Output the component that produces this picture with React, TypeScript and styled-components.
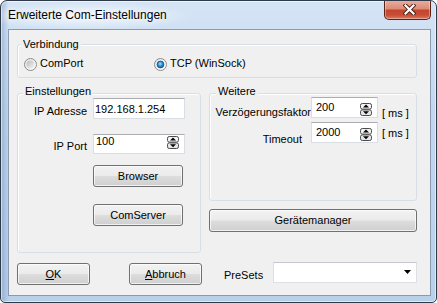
import React, { FC, ReactNode } from "react";
import styled, { createGlobalStyle } from "styled-components";

const GlobalStyle = createGlobalStyle`
  html, body {
    margin: 0;
    padding: 0;
    background: #ffffff;
  }
  body {
    font-family: "Liberation Sans", Arial, sans-serif;
    font-size: 11px;
    color: #000000;
  }
`;

const Window = styled.div`
  box-sizing: border-box;
  width: 437px;
  height: 303px;
  display: flex;
  flex-direction: column;
  border: 1px solid #2e3a48;
  border-radius: 7px 7px 5px 5px;
  overflow: hidden;
  background:
    radial-gradient(ellipse 110px 14px at 85px 15px, rgba(255, 255, 255, 0.75), rgba(255, 255, 255, 0) 100%),
    linear-gradient(90deg, rgba(60, 100, 150, 0.3) 0px, rgba(60, 100, 150, 0) 8px),
    linear-gradient(180deg, #d5e4f5 0%, #c3d8ef 35%, #b9d0ea 100%);
  box-shadow: inset 0 0 0 1px rgba(255, 255, 255, 0.55);
`;

const TitleBar = styled.div`
  flex: none;
  height: 28px;
  display: flex;
  align-items: flex-start;
  padding-left: 7px;
`;

const TitleText = styled.div`
  margin-top: 7px;
  font-size: 12px;
  line-height: 14px;
  text-shadow: 0 0 5px rgba(255, 255, 255, 0.9), 0 0 10px rgba(255, 255, 255, 0.8);
`;

const CloseButton = styled.div`
  box-sizing: border-box;
  margin: -1px 5px 0 auto;
  width: 47px;
  height: 20px;
  display: flex;
  align-items: center;
  justify-content: center;
  padding-left: 3px;
  border: 1px solid #5a2218;
  border-top: none;
  border-radius: 0 0 5px 5px;
  background: linear-gradient(180deg, #eab0a2 0%, #dc8c78 45%, #c4452e 55%, #c94e36 80%, #dc7c60 100%);
  box-shadow: inset 0 0 0 1px rgba(255, 255, 255, 0.35);
`;

const Client = styled.div`
  flex: 1;
  display: flex;
  flex-direction: column;
  margin: 0 5px 6px 7px;
  padding: 14px 0 0 8px;
  border: 1px solid #8a9bb0;
  background: #f0f0f0;
`;

const GroupBox = styled.div<{ $w: number; $h: number }>`
  position: relative;
  box-sizing: border-box;
  width: ${(p) => p.$w}px;
  height: ${(p) => p.$h}px;
  border: 1px solid #d5dfe5;
  border-radius: 3px;
  box-shadow: inset 1px 1px 0 #ffffff;
`;

const Legend = styled.span<{ $x: number; $y: number }>`
  position: absolute;
  left: ${(p) => p.$x}px;
  top: ${(p) => p.$y}px;
  padding: 0 2px;
  line-height: 13px;
  background: #f0f0f0;
`;

const RadioRow = styled.div`
  display: flex;
  padding: 12px 0 0 6px;
`;

const RadioItem = styled.label<{ $w?: number }>`
  display: flex;
  align-items: flex-start;
  gap: 3px;
  width: ${(p) => (p.$w ? `${p.$w}px` : "auto")};
  line-height: 13px;
  svg {
    margin-top: 1px;
  }
`;

const MiddleRow = styled.div`
  display: flex;
  gap: 8px;
  margin-top: 15px;
`;

const Column = styled.div`
  display: flex;
  flex-direction: column;
  gap: 8px;
`;

const FormGrid = styled.div<{ $cols: string; $rows: string; $gap: number; $top: number }>`
  display: grid;
  grid-template-columns: ${(p) => p.$cols};
  grid-template-rows: ${(p) => p.$rows};
  column-gap: ${(p) => p.$gap}px;
  align-items: start;
  padding-top: ${(p) => p.$top}px;
`;

const FieldLabel = styled.span<{ $dy: number; $pr?: number }>`
  grid-column: 1;
  text-align: right;
  white-space: nowrap;
  line-height: 13px;
  padding-top: ${(p) => p.$dy}px;
  padding-right: ${(p) => p.$pr ?? 0}px;
`;

const Unit = styled.span<{ $dy: number }>`
  white-space: pre;
  line-height: 13px;
  padding: ${(p) => p.$dy}px 0 0 4px;
`;

const EditBox = styled.div<{ $w: number; $h: number }>`
  box-sizing: border-box;
  width: ${(p) => p.$w}px;
  height: ${(p) => p.$h}px;
  display: flex;
  align-items: flex-start;
  background: #ffffff;
  border: 1px solid #d9dde4;
  border-top-color: #abadb3;
`;

const EditText = styled.span<{ $pl: number; $pt: number }>`
  flex: 1;
  line-height: 13px;
  padding: ${(p) => p.$pt}px 0 0 ${(p) => p.$pl}px;
`;

const SpinSlot = styled.span<{ $top: number }>`
  display: flex;
  margin: ${(p) => p.$top}px 5px 0 0;
`;

const Button = styled.button<{ $w: number; $h?: number; $col?: number }>`
  box-sizing: border-box;
  grid-column: ${(p) => p.$col ?? "auto"};
  width: ${(p) => p.$w}px;
  height: ${(p) => p.$h ?? 22}px;
  padding: 0;
  border: 1px solid #707070;
  border-radius: 3px;
  background: linear-gradient(180deg, #f2f2f2 0%, #ebebeb 48%, #dddddd 52%, #cfcfcf 100%);
  box-shadow: inset 0 0 0 1px rgba(255, 255, 255, 0.7);
  font: inherit;
  color: #000000;
  text-align: center;
  line-height: 13px;
`;

const Footer = styled.div`
  display: flex;
  align-items: flex-start;
  margin-top: 9px;
`;

const FooterButton = styled(Button)<{ $ml?: number }>`
  margin: 1px 0 0 ${(p) => p.$ml ?? 0}px;
`;

const PresetLabel = styled.span`
  width: 49px;
  margin: 7px 0 0 22px;
  line-height: 13px;
`;

const ComboBox = styled.div`
  box-sizing: border-box;
  width: 144px;
  height: 21px;
  display: flex;
  align-items: center;
  justify-content: flex-end;
  padding: 0 5px 2px 0;
  background: #ffffff;
  border: 1px solid #dcdfe4;
  border-top-color: #c5c8ce;
`;

const CloseGlyph: FC = () => (
  <svg width="13" height="11" viewBox="0 0 13 11">
    <path d="M2.5 1.5 L10.5 9.5 M10.5 1.5 L2.5 9.5" stroke="#4a1d15" strokeWidth="4" strokeLinecap="square" />
    <path d="M2.5 1.5 L10.5 9.5 M10.5 1.5 L2.5 9.5" stroke="#ffffff" strokeWidth="2.2" strokeLinecap="square" />
  </svg>
);

const RadioMark: FC<{ id: string; checked?: boolean }> = ({ id, checked }) => (
  <svg width="13" height="13" viewBox="0 0 13 13">
    <defs>
      <linearGradient id={`${id}-ring`} x1="0" y1="0" x2="1" y2="1">
        <stop offset="0" stopColor="#e4e4e4" />
        <stop offset="1" stopColor="#ffffff" />
      </linearGradient>
      <linearGradient id={`${id}-in`} x1="0" y1="0" x2="1" y2="1">
        <stop offset="0" stopColor="#b9b9b9" />
        <stop offset="1" stopColor="#f7f7f7" />
      </linearGradient>
      <radialGradient id={`${id}-dot`} cx="0.45" cy="0.4" r="0.65">
        <stop offset="0" stopColor="#9be6ff" />
        <stop offset="0.45" stopColor="#2f9be0" />
        <stop offset="1" stopColor="#0c4f8e" />
      </radialGradient>
    </defs>
    <circle cx="6.5" cy="6.5" r="6" fill={`url(#${id}-ring)`} stroke="#8b8c8c" />
    {checked ? (
      <circle cx="6.5" cy="6.5" r="3.4" fill={`url(#${id}-dot)`} stroke="#1c4c78" strokeWidth="0.8" />
    ) : (
      <circle cx="6.5" cy="6.5" r="4" fill={`url(#${id}-in)`} />
    )}
  </svg>
);

const SpinArrows: FC = () => (
  <svg width="12" height="13" viewBox="0 0 12 13">
    <rect x="0.5" y="0.5" width="11" height="5.6" rx="1.8" fill="#f3f3f3" stroke="#4a4a4a" />
    <rect x="0.5" y="6.9" width="11" height="5.6" rx="1.8" fill="#e6e6e6" stroke="#4a4a4a" />
    <path d="M6 1.6 L9 4.6 H3 Z" fill="#000000" />
    <path d="M3 8.2 H9 L6 11.2 Z" fill="#000000" />
  </svg>
);

const DropArrow: FC = () => (
  <svg width="7" height="4" viewBox="0 0 7 4">
    <path d="M0 0 H7 L3.5 4 Z" fill="#000000" />
  </svg>
);

type EditProps = {
  value: string;
  w: number;
  h: number;
  pl: number;
  pt: number;
  spinTop?: number;
};

const Edit: FC<EditProps> = ({ value, w, h, pl, pt, spinTop }) => (
  <EditBox $w={w} $h={h}>
    <EditText $pl={pl} $pt={pt}>{value}</EditText>
    {spinTop !== undefined && (
      <SpinSlot $top={spinTop}>
        <SpinArrows />
      </SpinSlot>
    )}
  </EditBox>
);

const Group: FC<{ title: string; w: number; h: number; lx: number; ly: number; children: ReactNode }> = ({
  title,
  w,
  h,
  lx,
  ly,
  children,
}) => (
  <GroupBox $w={w} $h={h}>
    <Legend $x={lx} $y={ly}>{title}</Legend>
    {children}
  </GroupBox>
);

const App: FC = () => (
  <>
    <GlobalStyle />
    <Window>
      <TitleBar>
        <TitleText>Erweiterte Com-Einstellungen</TitleText>
        <CloseButton>
          <CloseGlyph />
        </CloseButton>
      </TitleBar>
      <Client>
        <Group title="Verbindung" w={400} h={34} lx={3} ly={-7}>
          <RadioRow>
            <RadioItem $w={130}>
              <RadioMark id="rb-com" />
              ComPort
            </RadioItem>
            <RadioItem>
              <RadioMark id="rb-tcp" checked />
              TCP (WinSock)
            </RadioItem>
          </RadioRow>
        </Group>

        <MiddleRow>
          <Group title="Einstellungen" w={184} h={160} lx={5} ly={-9}>
            <FormGrid $cols="69px 92px" $rows="36px 31px 39px 22px" $gap={6} $top={4}>
              <FieldLabel $dy={7}>IP Adresse</FieldLabel>
              <Edit value="192.168.1.254" w={92} h={21} pl={1} pt={4} />
              <FieldLabel $dy={6}>IP Port</FieldLabel>
              <Edit value="100" w={92} h={20} pl={2} pt={0} spinTop={1} />
              <Button $w={90} $col={2}>Browser</Button>
              <Button $w={90} $col={2}>ComServer</Button>
            </FormGrid>
          </Group>

          <Column>
            <Group title="Weitere" w={208} h={108} lx={6} ly={-9}>
              <FormGrid $cols="101px 67px auto" $rows="25px 21px" $gap={0} $top={3}>
                <FieldLabel $dy={9}>Verzögerungsfaktor</FieldLabel>
                <Edit value="200" w={67} h={21} pl={4} pt={3} spinTop={5} />
                <Unit $dy={10}>[ ms ]</Unit>
                <FieldLabel $dy={11} $pr={9}>Timeout</FieldLabel>
                <Edit value="2000" w={67} h={21} pl={4} pt={3} spinTop={5} />
                <Unit $dy={5}>[ ms ]</Unit>
              </FormGrid>
            </Group>
            <Button $w={208} $h={23}>Gerätemanager</Button>
          </Column>
        </MiddleRow>

        <Footer>
          <FooterButton $w={73}>
            <u>O</u>K
          </FooterButton>
          <FooterButton $w={73} $ml={39}>
            <u>A</u>bbruch
          </FooterButton>
          <PresetLabel>PreSets</PresetLabel>
          <ComboBox>
            <DropArrow />
          </ComboBox>
        </Footer>
      </Client>
    </Window>
  </>
);

export default App;
